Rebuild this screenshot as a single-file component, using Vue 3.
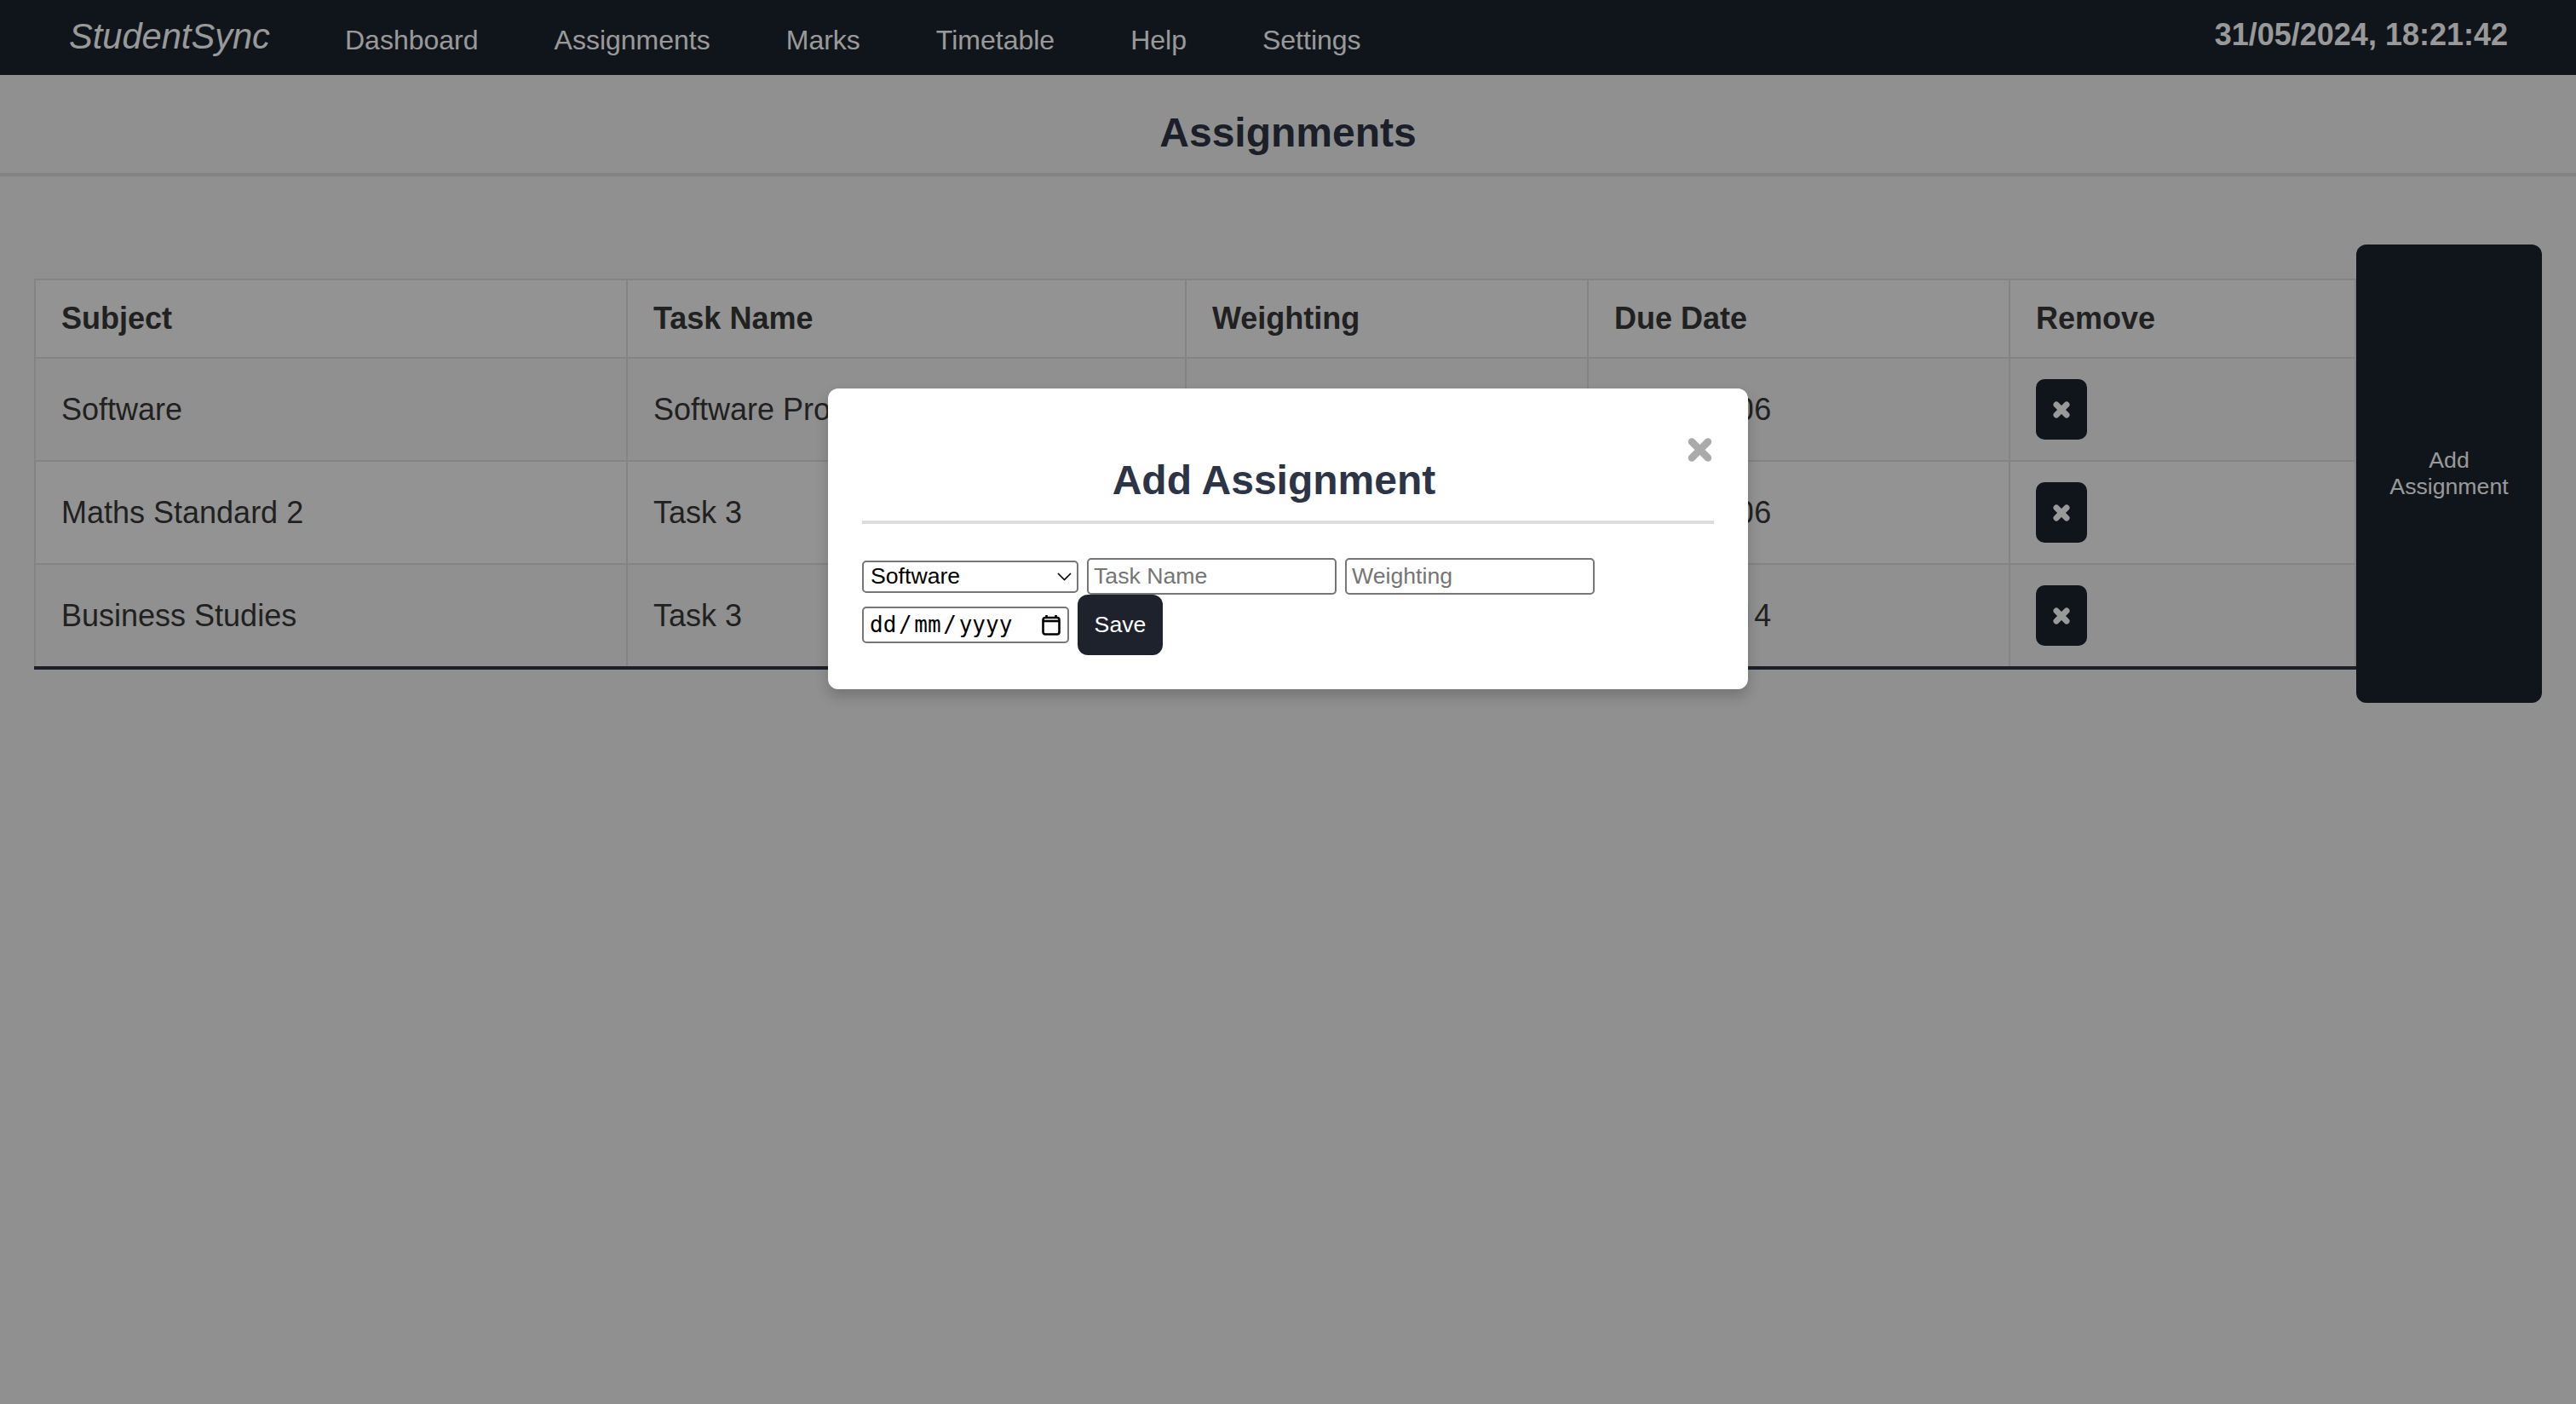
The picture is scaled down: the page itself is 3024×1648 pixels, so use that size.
<script setup>
const links = ['Dashboard', 'Assignments', 'Marks', 'Timetable', 'Help', 'Settings']
const rows = [
  { subject: 'Software', task: 'Software Project', weight: '30%', due: '2024-06-06' },
  { subject: 'Maths Standard 2', task: 'Task 3', weight: '20%', due: '2024-06-06' },
  { subject: 'Business Studies', task: 'Task 3', weight: '25%', due: '2024-06-14' },
]
</script>

<template>
  <div class="page">
    <header class="topbar">
      <span class="brand">StudentSync</span>
      <nav class="links">
        <a v-for="l in links" :key="l" class="link">{{ l }}</a>
      </nav>
      <span class="clock">31/05/2024, 18:21:42</span>
    </header>
    <h1 class="title">Assignments</h1>
    <main class="content">
      <table class="grid">
        <colgroup>
          <col class="c1" /><col class="c2" /><col class="c3" /><col class="c4" /><col class="c5" />
        </colgroup>
        <thead>
          <tr>
            <th>Subject</th><th>Task Name</th><th>Weighting</th><th>Due Date</th><th>Remove</th>
          </tr>
        </thead>
        <tbody>
          <tr v-for="r in rows" :key="r.subject">
            <td>{{ r.subject }}</td>
            <td>{{ r.task }}</td>
            <td>{{ r.weight }}</td>
            <td>{{ r.due.slice(0, 8) }}<span class="tens">{{ r.due.slice(8, 9) }}</span>{{ r.due.slice(9) }}</td>
            <td>
              <button class="remove" aria-label="Remove">
                <svg width="20" height="20" viewBox="0 0 20 20"><path class="cross" d="M4 4 16 16M16 4 4 16" /></svg>
              </button>
            </td>
          </tr>
        </tbody>
      </table>
      <button class="add">Add<br />Assignment</button>
    </main>

    <div class="overlay">
      <section class="modal">
        <svg class="close" width="29" height="28" viewBox="0 0 29 28"><path d="M5 4.5 24 23.5M24 4.5 5 23.5" /></svg>
        <h2 class="heading">Add Assignment</h2>
        <form class="form" @submit.prevent>
          <div class="select">
            <span>Software</span>
            <svg width="17" height="10" viewBox="0 0 17 10"><path d="M1 1 8.5 8.5 16 1" /></svg>
          </div>
          <input class="field" placeholder="Task Name" />
          <input class="field" placeholder="Weighting" />
          <div class="date">
            <span class="date-text">dd<span class="slash">/</span>mm<span class="slash">/</span>yyyy</span>
            <svg width="22" height="24" viewBox="0 0 22 24"><path d="M5.5 0v3M16.5 0v3" /><rect x="1.5" y="3" width="19" height="19.5" rx="2.5" /><path d="M1.5 7h19" /></svg>
          </div>
          <button class="save">Save</button>
        </form>
      </section>
    </div>
  </div>
</template>

<style>
html, body { margin: 0; background: #f0f0f0; }
</style>

<style scoped>
.page {
  position: relative;
  width: 3024px;
  height: 1648px;
  overflow: hidden;
  background: #f0f0f0;
  font-family: "Liberation Sans", Arial, sans-serif;
  color: #383838;
}
.topbar {
  height: 88px;
  background: #1c222e;
  color: #fff;
  display: flex;
  align-items: center;
  padding: 0 80px 0 81px;
  box-sizing: border-box;
}
.brand {
  font-style: italic;
  font-size: 41.6px;
  width: 324px;
  position: relative;
  top: -1px;
}
.links { display: flex; gap: 89px; font-size: 32px; flex: 1; position: relative; top: 3px; }
.link { color: #fff; }
.clock { font-size: 36px; font-weight: 700; position: relative; top: -3px; }
.title {
  margin: 0;
  height: 119px;
  padding-top: 21px;
  box-sizing: border-box;
  line-height: 94px;
  text-align: center;
  font-size: 48px;
  font-weight: 700;
  color: #2d3446;
  border-bottom: 4px solid #ddd;
}
.content {
  display: flex;
  align-items: flex-start;
  padding: 80px 40px 0;
}
.grid {
  width: 2724px;
  flex: none;
  table-layout: fixed;
  border-collapse: collapse;
  margin-top: 40px;
  font-size: 36px;
  border-bottom: 4px solid #2d3446;
}
.c1 { width: 695px; }
.c2 { width: 656px; }
.c3 { width: 472px; }
.c4 { width: 495px; }
.c5 { width: 406px; }
th, td {
  border: 2px solid #ddd;
  padding: 0 30px;
  text-align: left;
}
th { height: 90px; font-weight: 700; background: #f5f5f5; }
td { height: 119px; }
tbody tr:nth-child(even) td { background: #f5f5f5; }
tbody tr:last-child td { border-bottom: 4px solid #2d3446; }
.tens { font-family: Roboto, sans-serif; }
.remove {
  width: 60px;
  height: 71px;
  padding: 0;
  border: 0;
  border-radius: 10px;
  background: #1c222e;
  display: flex;
  align-items: center;
  justify-content: center;
}
.cross { fill: none; stroke: #fff; stroke-width: 7; stroke-linecap: round; }
.add {
  width: 218px;
  height: 538px;
  flex: none;
  border: 0;
  padding: 0;
  border-radius: 12px;
  background: #1c222e;
  color: #fff;
  font: 26.67px/31px "Liberation Sans", Arial, sans-serif;
  text-align: center;
}
.overlay {
  position: absolute;
  inset: 0;
  background: rgba(0, 0, 0, 0.4);
  display: flex;
  justify-content: center;
  align-items: flex-start;
  padding-top: 456px;
  box-sizing: border-box;
}
.modal {
  width: 1080px;
  height: 353px;
  box-sizing: border-box;
  padding: 40px;
  background: #fff;
  border-radius: 12px;
  box-shadow: 0 8px 16px rgba(0, 0, 0, 0.2);
}
.close { float: right; margin: 18px 2px 0 2px; fill: none; stroke: #aaa; stroke-width: 8.5; stroke-linecap: round; }
.heading {
  margin: 0 0 40px;
  padding: 40px 0 20px;
  font-size: 48px;
  line-height: 55px;
  text-align: center;
  color: #2d3446;
  border-bottom: 4px solid #ddd;
}
.form {
  display: flex;
  flex-wrap: wrap;
  align-items: center;
  column-gap: 10px;
}
.select, .field, .date {
  box-sizing: border-box;
  border: 2px solid #767676;
  border-radius: 5px;
  background: #fff;
  font: 26.67px "Liberation Sans", Arial, sans-serif;
  color: #000;
}
.select {
  width: 254px;
  height: 38px;
  padding: 0 6px 0 8px;
  display: flex;
  align-items: center;
  justify-content: space-between;
}
.select svg { fill: none; stroke: #000; stroke-width: 1.6; }
.field {
  width: 293px;
  height: 43px;
  padding: 0 6px;
  outline: none;
}
.field::placeholder { color: #757575; opacity: 1; }
.date {
  width: 243px;
  height: 43px;
  padding: 0 8px 0 7px;
  display: flex;
  align-items: center;
  justify-content: space-between;
}
.date-text { font-family: "DejaVu Sans Mono", "Liberation Mono", monospace; font-size: 26px; line-height: 36px; position: relative; top: -1px; }
.slash { padding: 0 2.7px; }
.date svg { fill: none; stroke: #000; stroke-width: 2.6; }
.save {
  width: 100px;
  height: 71px;
  padding: 0;
  border: 0;
  border-radius: 12px;
  background: #1e222d;
  color: #fff;
  font: 26.67px "Liberation Sans", Arial, sans-serif;
}
</style>
